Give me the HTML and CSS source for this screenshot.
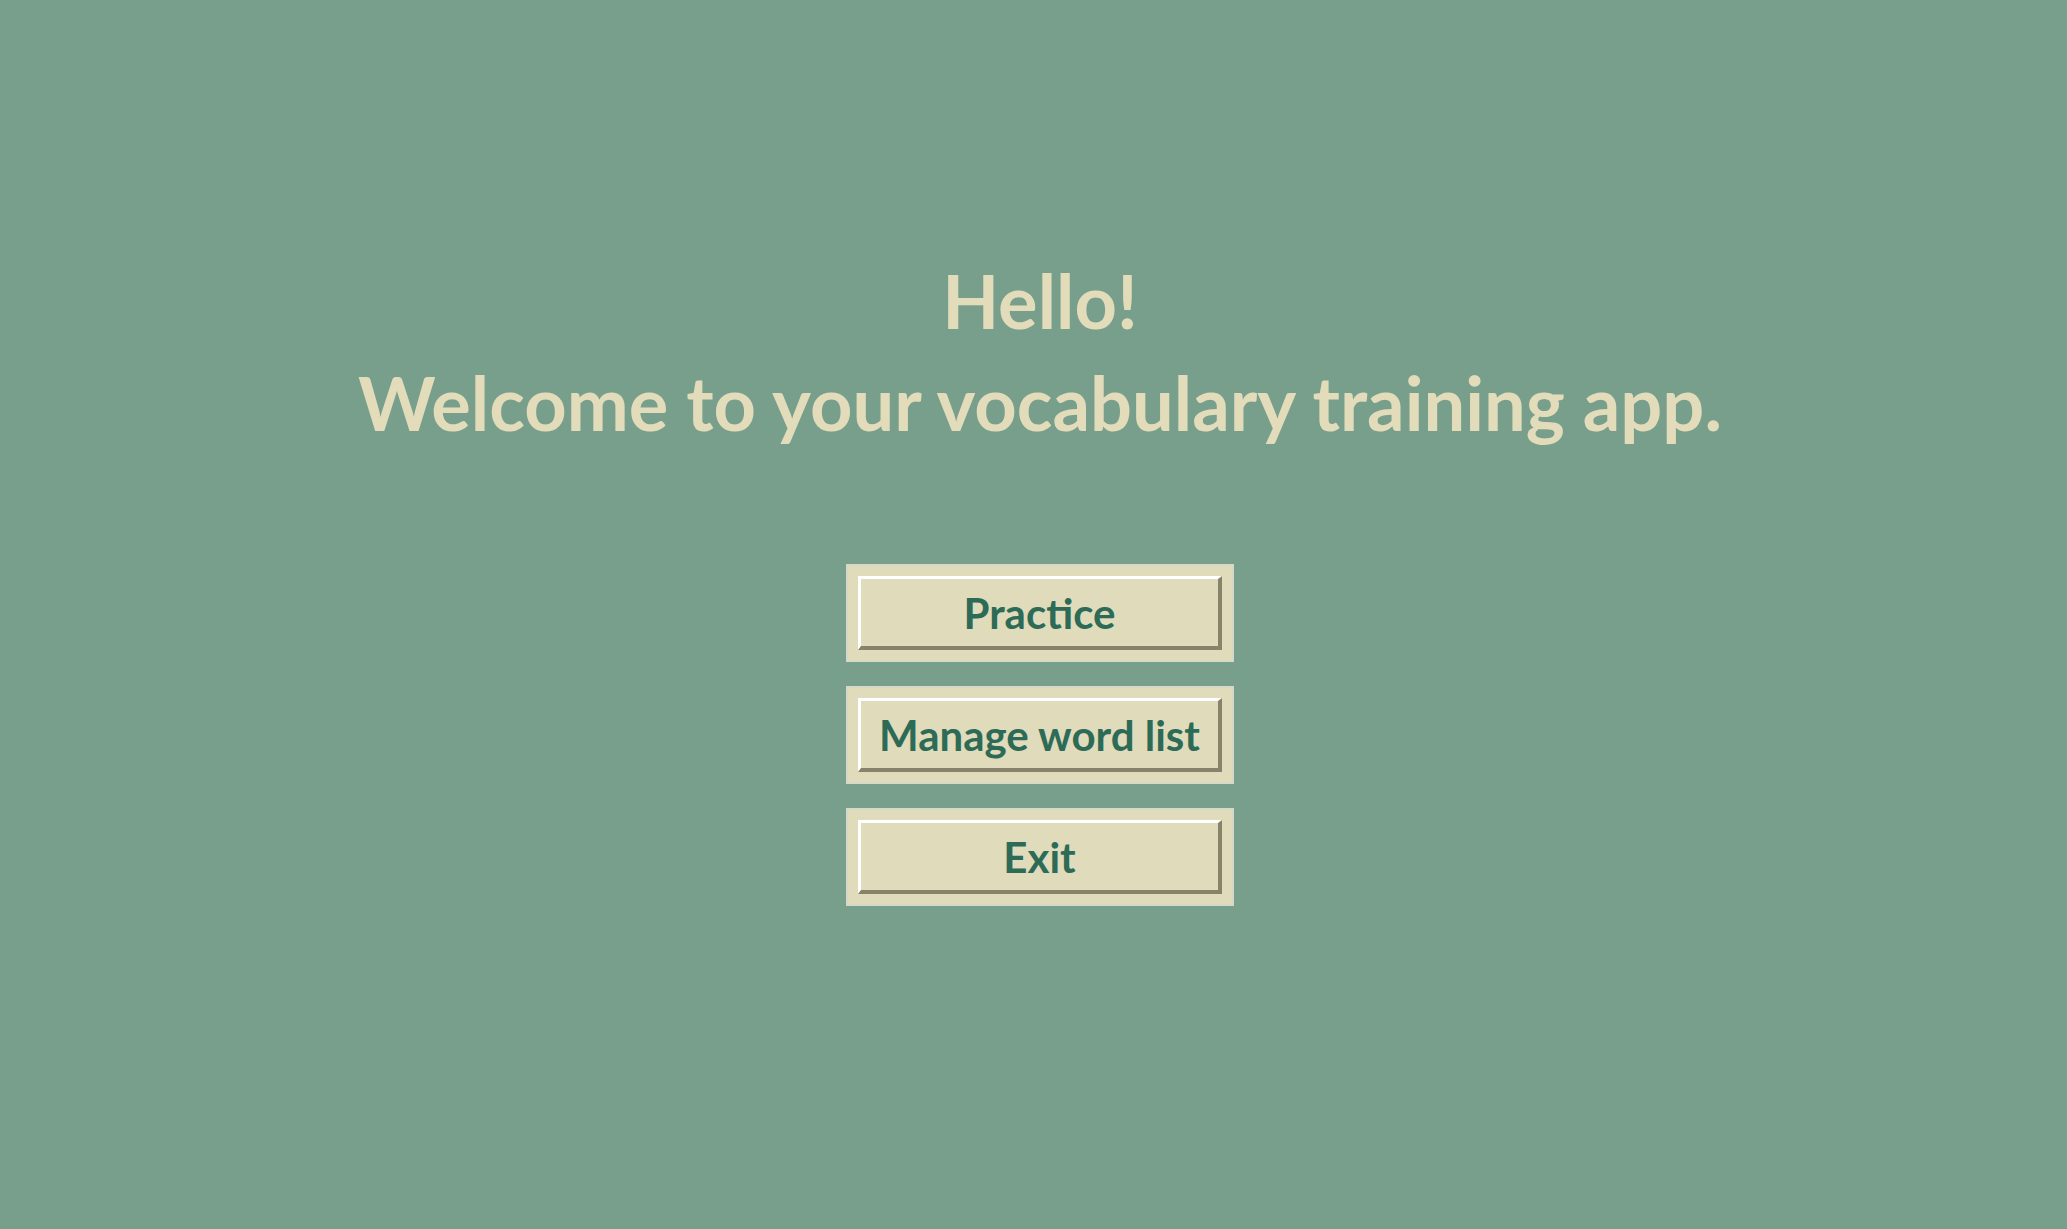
FILE: index.html
```html
<!DOCTYPE html>
<html lang="en">
<head>
<meta charset="utf-8">
<title>Vocabulary Trainer</title>
<link rel="stylesheet" href="styles.css">
</head>
<body>
<main class="screen">
  <header class="greeting">
    <div class="greeting-line">Hello!</div>
    <div class="greeting-line">Welcome to your vocabulary training app.</div>
  </header>
  <nav class="menu">
    <div class="btn-frame"><button class="btn">Practice</button></div>
    <div class="btn-frame"><button class="btn">Manage word list</button></div>
    <div class="btn-frame"><button class="btn">Exit</button></div>
  </nav>
</main>
</body>
</html>
```
FILE: styles.css
```css
html, body {
  margin: 0;
  padding: 0;
  height: 100%;
}
body {
  background: #789f8b;
  font-family: Lato, "Open Sans", sans-serif;
  overflow: hidden;
}
.screen {
  display: flex;
  flex-direction: column;
  align-items: center;
  padding-top: 250px;
  padding-left: 13px;
}
.greeting {
  display: flex;
  flex-direction: column;
  align-items: center;
  color: #e2dcbb;
  font-size: 74px;
  font-weight: 700;
  line-height: 102px;
  letter-spacing: 0;
}
.menu {
  display: flex;
  flex-direction: column;
  align-items: center;
  gap: 24px;
  margin-top: 110px;
}
.btn-frame {
  background: #e0dbbb;
  border: 2px solid #d6d9c7;
  padding: 10px;
}
.btn {
  display: flex;
  align-items: center;
  justify-content: center;
  box-sizing: border-box;
  width: 364px;
  height: 74px;
  padding: 0;
  margin: 0;
  background: #e0dbbb;
  border-style: solid;
  border-width: 3px 4px 4px 3px;
  border-color: #ffffff #87826a #87826a #ffffff;
  color: #2d6b57;
  font-family: Lato, "Open Sans", sans-serif;
  font-size: 42px;
  font-weight: 700;
  line-height: 1;
  cursor: pointer;
}
```
